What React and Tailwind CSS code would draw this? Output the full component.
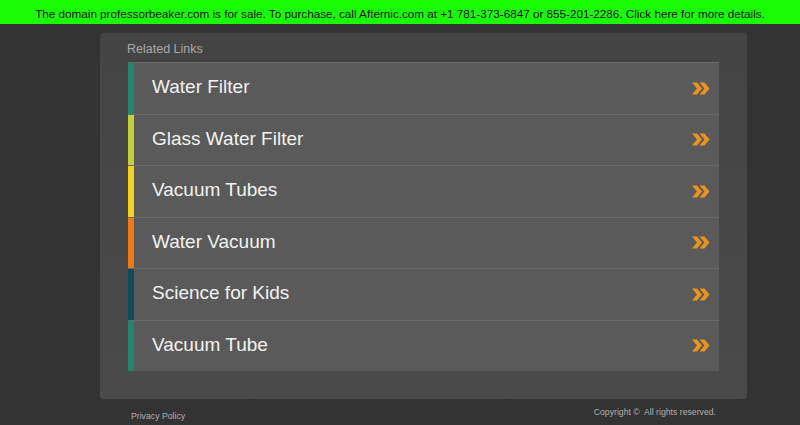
import React from "react";

const items = [
  { t: "Water Filter", c: "bg-[#22876d]" },
  { t: "Glass Water Filter", c: "bg-[#bfd23a]" },
  { t: "Vacuum Tubes", c: "bg-[#f4d11f]" },
  { t: "Water Vacuum", c: "bg-[#ee7a16]" },
  { t: "Science for Kids", c: "bg-[#0f4a5a]" },
  { t: "Vacuum Tube", c: "bg-[#22876d]" },
];

function Chev() {
  return (
    <svg width="19" height="15" viewBox="0 0 19 15" className="mr-[9px] mt-[3px]">
      <path d="M1 1.5 L6 1.5 L11 7.5 L6 13.5 L1 13.5 L6 7.5 Z" fill="#ea9420" />
      <path d="M8.5 1.5 L13.5 1.5 L18.5 7.5 L13.5 13.5 L8.5 13.5 L13.5 7.5 Z" fill="#ea9420" />
    </svg>
  );
}

export default function App() {
  return (
    <div className="w-[800px] h-[425px] bg-[#333333] overflow-hidden font-['Liberation_Sans',Arial,sans-serif]">
      <div className="h-[24px] bg-[#1afc04] flex items-center justify-center text-[11.7px] text-[#111] pt-[3px] leading-none whitespace-nowrap">
        The domain professorbeaker.com is for sale. To purchase, call Afternic.com at +1 781-373-6847 or 855-201-2286. Click here for more details.
      </div>
      <div className="ml-[100px] mt-[9px] w-[647px] h-[366px] rounded-[4px] bg-gradient-to-b from-[#444444] to-[#4a4a4a] pt-[9px] pl-[28px] pr-[28px]">
        <div className="text-[12.5px] text-[#a8a8a8] leading-[15px] h-[20px] ml-[-1px]">Related Links</div>
        <div className="flex flex-col">
          {items.map((it, i) => (
            <div key={i} className="flex h-[51.5px] bg-[#5a5a5a] border-t border-[#696969]">
              <div className={`w-[6px] ${it.c}`}></div>
              <div className="flex-1 flex items-center justify-between pl-[18px] pb-[3px]">
                <span className="text-[19px] text-[#f2f2f2] leading-none">{it.t}</span>
                <Chev />
              </div>
            </div>
          ))}
        </div>
      </div>
      <div className="flex justify-between w-[585px] ml-[131px] mt-[7px] text-[8.7px] text-[#b0b0b0]">
        <span className="mt-[4px]">Privacy Policy</span>
        <span>Copyright ©&nbsp; All rights reserved.</span>
      </div>
    </div>
  );
}
